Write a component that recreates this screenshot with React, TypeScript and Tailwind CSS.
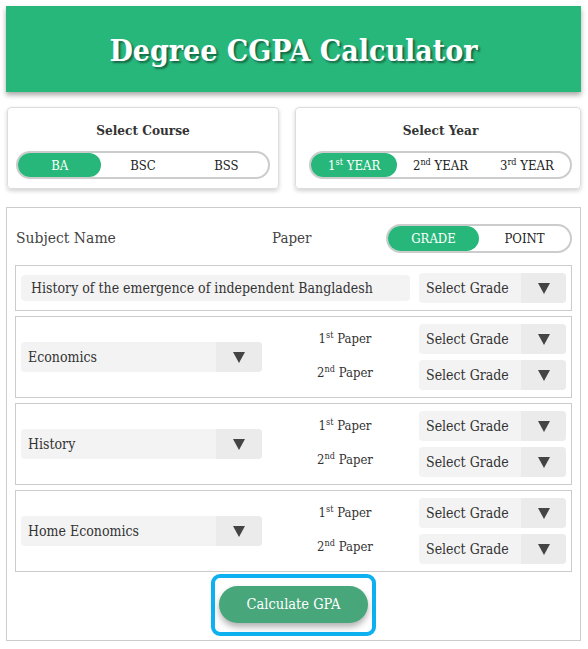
import React from 'react'

type Opt = { main: string; sup?: string }

function Arrow() {
  return (
    <svg width="12" height="11" viewBox="0 0 12 11">
      <polygon points="0,0 12,0 6,11" fill="#444" />
    </svg>
  )
}

function Toggle({ options, active, textSize }: { options: Opt[]; active: number; textSize: string }) {
  return (
    <div className="flex h-full rounded-full border-2 border-[#cccccc] bg-white">
      {options.map((o, i) => (
        <div
          key={o.main + i}
          className={`flex-1 flex items-center justify-center rounded-full ${textSize} ${
            i === active ? 'bg-[#27b77a] text-white' : 'text-[#222]'
          }`}
        >
          {o.sup ? (
            <span>
              {o.sup.slice(0, 1)}
              <sup className="text-[9px] -top-[5px]">{o.sup.slice(1)}</sup> {o.main}
            </span>
          ) : (
            o.main
          )}
        </div>
      ))}
    </div>
  )
}

function GradeSelect({ label = 'Select Grade', width = 'w-[147px]', arrow = 'w-[45px]' }: { label?: string; width?: string; arrow?: string }) {
  return (
    <div className={`flex h-[30px] ${width} shrink-0 overflow-hidden rounded-[4px] bg-[#f3f3f3]`}>
      <div className="flex flex-1 items-center pl-[7px] text-[14px] text-[#333] whitespace-nowrap">{label}</div>
      <div className={`flex ${arrow} items-center justify-center bg-[#ebebeb]`}>
        <Arrow />
      </div>
    </div>
  )
}

function PaperLabel({ n, s }: { n: string; s: string }) {
  return (
    <div className="flex h-[30px] items-center justify-center -mt-[2px] text-[13px] text-[#333]">
      <span>
        {n}
        <sup className="text-[9px] -top-[5px]">{s}</sup> Paper
      </span>
    </div>
  )
}

function SubjectRow({ name }: { name: string }) {
  return (
    <div className="flex items-center border border-[#cccccc] px-[5px] py-[7px]">
      <GradeSelect label={name} width="w-[241px]" arrow="w-[46px]" />
      <div className="flex flex-1 flex-col gap-[6px] pl-[9px]">
        <PaperLabel n="1" s="st" />
        <PaperLabel n="2" s="nd" />
      </div>
      <div className="flex flex-col gap-[6px]">
        <GradeSelect />
        <GradeSelect />
      </div>
    </div>
  )
}

export default function App() {
  return (
    <div className="min-h-[649px] w-[588px] bg-white pt-[6px] font-['DejaVu_Serif_Condensed','DejaVu_Serif',serif] text-[#333]">
      {/* Header */}
      <div className="ml-[6px] flex h-[86px] w-[575px] items-center justify-center bg-[#27b77a] shadow-[0_3px_5px_rgba(0,0,0,0.35)]">
        <h1 className="mt-[3px] text-[30px] font-bold text-white [text-shadow:2px_2px_2px_rgba(0,0,0,0.45)]">Degree CGPA Calculator</h1>
      </div>

      {/* Course / Year */}
      <div className="ml-[7px] mt-[15px] flex w-[574px] gap-[16px]">
        <div className="flex h-[82px] w-[272px] flex-col items-center rounded-[4px] border border-[#dddddd] px-[8px] pt-[12px] shadow-[0_2px_4px_rgba(0,0,0,0.18)]">
          <div className="text-[13.5px] font-bold text-[#333]">Select Course</div>
          <div className="mt-[11px] h-[28px] w-full">
            <Toggle options={[{ main: 'BA' }, { main: 'BSC' }, { main: 'BSS' }]} active={0} textSize="text-[13px]" />
          </div>
        </div>
        <div className="flex h-[82px] flex-1 flex-col items-center rounded-[4px] border border-[#dddddd] pl-[13px] pr-[8px] pt-[12px] shadow-[0_2px_4px_rgba(0,0,0,0.18)]">
          <div className="text-[13.5px] font-bold text-[#333]">Select Year</div>
          <div className="mt-[11px] h-[28px] w-full">
            <Toggle
              options={[
                { main: 'YEAR', sup: '1st' },
                { main: 'YEAR', sup: '2nd' },
                { main: 'YEAR', sup: '3rd' },
              ]}
              active={0}
              textSize="text-[13px]"
            />
          </div>
        </div>
      </div>

      {/* Main panel */}
      <div className="ml-[6px] mt-[18px] w-[575px] border border-[#cccccc] px-[8px] pb-[4px] pt-[16px]">
        <div className="flex h-[29px] items-center">
          <div className="w-[257px] pl-[1px] text-[15.5px] text-[#444]">Subject Name</div>
          <div className="flex-1 text-[15px] text-[#444]">Paper</div>
          <div className="h-[29px] w-[186px]">
            <Toggle options={[{ main: 'GRADE' }, { main: 'POINT' }]} active={0} textSize="text-[13px]" />
          </div>
        </div>

        <div className="mt-[12px] flex flex-col gap-[5px]">
          <div className="flex items-center gap-[9px] border border-[#cccccc] px-[5px] py-[7px]">
            <div className="flex h-[26px] w-[389px] items-center rounded-[4px] bg-[#f3f3f3] px-[10px] text-[14px] text-[#333] whitespace-nowrap">
              History of the emergence of independent Bangladesh
            </div>
            <GradeSelect />
          </div>
          <SubjectRow name="Economics" />
          <SubjectRow name="History" />
          <SubjectRow name="Home Economics" />
        </div>

        <div className="mt-[2px] flex justify-center">
          <div className="rounded-[9px] border-4 border-[#0db1f0] px-[4px] pb-[9px] pt-[8px]">
            <button className="h-[37px] w-[149px] rounded-full bg-[#48a67b] text-[14.5px] text-white shadow-[0_4px_6px_rgba(0,0,0,0.3)]">
              Calculate GPA
            </button>
          </div>
        </div>
      </div>
    </div>
  )
}
